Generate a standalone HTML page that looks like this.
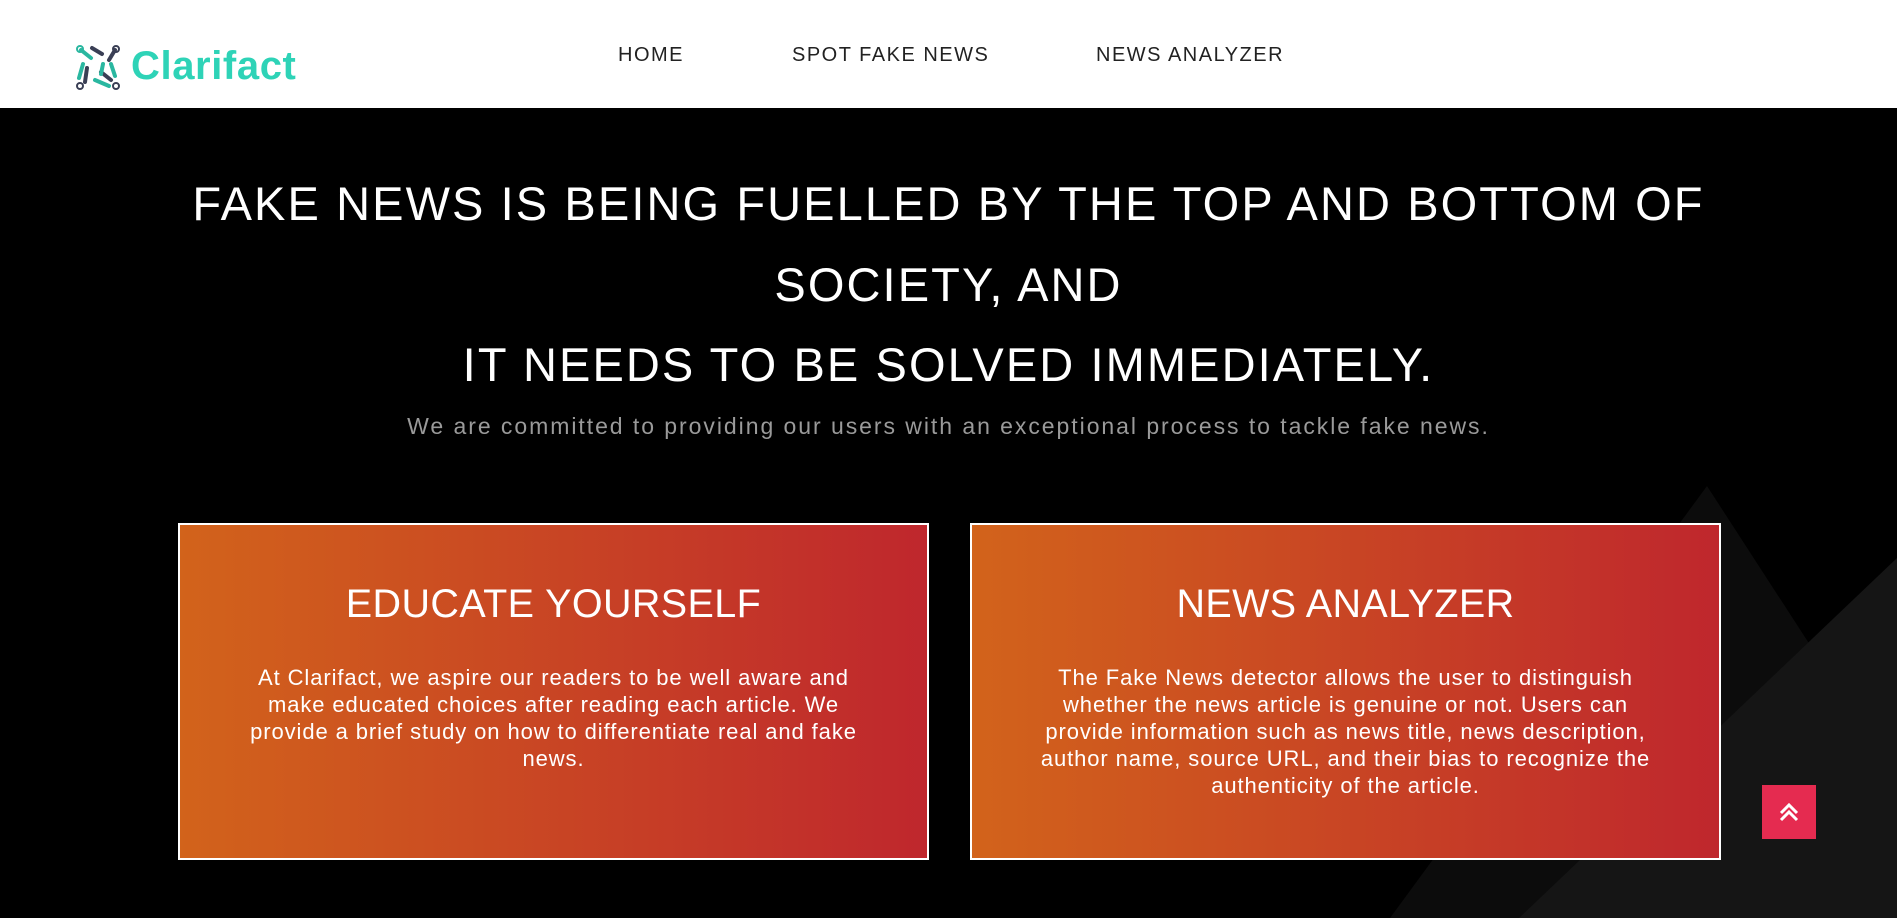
<!DOCTYPE html>
<html><head><meta charset="utf-8"><style>
*{margin:0;padding:0;box-sizing:border-box}
body{width:1899px;height:918px;overflow:hidden;background:#fff;font-family:"Liberation Sans",sans-serif;position:relative}
.hdr{position:absolute;left:0;top:0;width:1899px;height:108px;background:#fff}
.nav a{position:absolute;top:44px;font-size:20px;color:#222;text-decoration:none;letter-spacing:1.5px}
.logo{position:absolute;left:131px;top:44px;font-size:40px;font-weight:bold;color:#2ed3b7;letter-spacing:0.6px}
.main{position:absolute;left:0;top:108px;width:1897px;height:810px;background:#000;overflow:hidden}
.h{position:absolute;left:0;width:1897px;text-align:center;color:#fff;font-size:47px;letter-spacing:2.1px;white-space:nowrap}
.sub{position:absolute;left:0;top:305px;width:1897px;text-align:center;color:#9a9a9a;font-size:23px;letter-spacing:1.95px;white-space:nowrap}
.card{position:absolute;top:415px;width:751px;height:337px;border:2px solid #fff;background:linear-gradient(90deg,#d2631b,#bf272d);color:#fff;text-align:center}
.card h2{font-weight:normal;font-size:39.5px;margin-top:57px;letter-spacing:0.4px}
.card p{font-size:22px;line-height:27px;margin:37px auto 0;letter-spacing:0.9px;white-space:nowrap}
.up{position:absolute;left:1762px;top:677px;width:54px;height:54px;background:#e52b50}
</style></head><body>
<div class="hdr">
<svg style="position:absolute;left:75px;top:44px" width="46" height="47" viewBox="0 0 46 47">
<g stroke-linecap="round" fill="none" stroke-width="4">
<path d="M6 6 L16 14" stroke="#2ab7a0"/><path d="M17 4 L27 10" stroke="#3a3f55"/>
<path d="M40 6 L34 16" stroke="#3a3f55"/><path d="M36 20 L40 32" stroke="#2ab7a0"/>
<path d="M8 20 L4 34" stroke="#2ab7a0"/><path d="M12 24 L10 38" stroke="#3a3f55"/>
<path d="M20 36 L34 42" stroke="#2ab7a0"/><path d="M26 28 L36 36" stroke="#3a3f55"/>
<path d="M28 20 L26 30" stroke="#2ab7a0"/>
</g>
<circle cx="5" cy="5" r="3" fill="none" stroke="#2ab7a0" stroke-width="2"/>
<circle cx="41" cy="5" r="3" fill="none" stroke="#3a3f55" stroke-width="2"/>
<circle cx="5" cy="42" r="3" fill="none" stroke="#3a3f55" stroke-width="2"/>
<circle cx="41" cy="42" r="3" fill="none" stroke="#3a3f55" stroke-width="2"/>
</svg>
<div class="logo">Clarifact</div>
<div class="nav"><a style="left:618px">HOME</a><a style="left:792px">SPOT FAKE NEWS</a><a style="left:1096px">NEWS ANALYZER</a></div>
</div>
<div class="main">
<svg style="position:absolute;left:0;top:0" width="1897" height="810">
<polygon points="1707,378 2000,830 1390,810" fill="#0c0c0c"/>
<polygon points="1897,450 1897,810 1519,810" fill="#151515"/>
</svg>
<div class="h" style="top:68px">FAKE NEWS IS BEING FUELLED BY THE TOP AND BOTTOM OF</div>
<div class="h" style="top:149px">SOCIETY, AND</div>
<div class="h" style="top:229px">IT NEEDS TO BE SOLVED IMMEDIATELY.</div>
<div class="sub">We are committed to providing our users with an exceptional process to tackle fake news.</div>
<div class="card" style="left:178px"><h2>EDUCATE YOURSELF</h2><p>At Clarifact, we aspire our readers to be well aware and<br>make educated choices after reading each article. We<br>provide a brief study on how to differentiate real and fake<br>news.</p></div>
<div class="card" style="left:970px"><h2>NEWS ANALYZER</h2><p>The Fake News detector allows the user to distinguish<br>whether the news article is genuine or not. Users can<br>provide information such as news title, news description,<br>author name, source URL, and their bias to recognize the<br>authenticity of the article.</p></div>
<div class="up"><svg width="54" height="54"><path d="M19 28 L27 20 L35 28 M19 35 L27 27 L35 35" stroke="#fff" stroke-width="3" fill="none"/></svg></div>
</div>
</body></html>
